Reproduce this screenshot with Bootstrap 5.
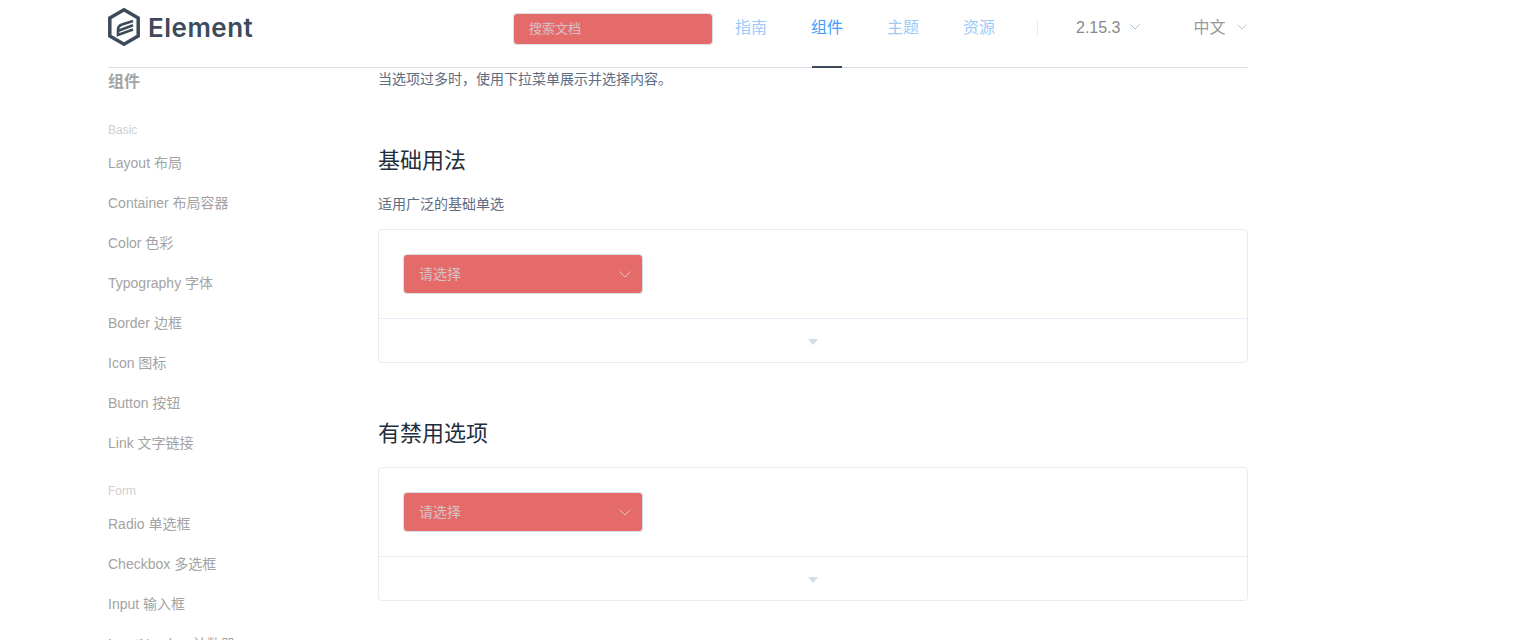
<!DOCTYPE html>
<html lang="zh">
<head>
<meta charset="utf-8">
<title>Element</title>
<link href="https://cdn.jsdelivr.net/npm/bootstrap@5.3.0/dist/css/bootstrap.min.css" rel="stylesheet">
<style>
html,body{height:640px;overflow:hidden;background:#fff}
body{font-family:"Liberation Sans","Noto Sans CJK SC",sans-serif;font-size:14px;color:#5e6d82}
.shell{width:1140px;margin-left:108px}
.topbar{height:68px;border-bottom:1px solid #dcdfe6;position:relative}
.brand{gap:8px;padding-top:8px;height:67px;width:405px;flex:none;align-items:flex-start}
.brand-text{font-family:"Inter","Liberation Sans",sans-serif;font-size:26px;line-height:40px;font-weight:600;color:#3d4a5a;letter-spacing:.5px}
.search-box{width:200px;height:32px;flex:none;margin-top:13px;background:#e56b6b;border:1px solid #dcdfe6;border-radius:4px;color:#d5c2c8;font-size:13px;line-height:30px;padding-left:15px}
.top-link{position:relative;flex:none;font-size:16px;line-height:24px;color:#9ccbf7;text-decoration:none;margin-top:16px;width:32px;white-space:nowrap}
.top-link.is-on{color:#409eff}
.top-link.is-on::after{content:"";position:absolute;left:1px;right:1px;top:50px;height:2px;background:#3d4a5a}
.sep{width:1px;height:16px;flex:none;background:#ebebeb;margin:20px 38px 0 0}
.ver{font-size:16px;line-height:24px;margin-top:16px;color:#888;white-space:nowrap}
.chev{display:block;flex:none;fill:none;stroke-width:1;margin-top:24px}
.side{width:270px;flex:none}
.side-title{font-size:16px;line-height:24px;font-weight:700;color:#a3a3a3;margin-top:2px}
.side-group{font-size:12px;line-height:18px;color:#cfcfcf;margin-top:27px}
.side-list{margin:0}
.side-list li{height:40px;line-height:40px;font-size:14px;color:#a3a3a3;white-space:nowrap}
.side-list+.side-group{margin-top:19px}
.side-group+.side-list{margin-top:4px}
.main-col{width:870px;flex:none}
.lead-text{line-height:20px;margin:1px 0 0}
.sec-title{font-size:22px;line-height:32px;font-weight:400;color:#1f2f3d;margin:56px 0 0}
.sec-desc{line-height:20px;margin:17px 0 15px}
.demo-box{border:1px solid #ebebeb;border-radius:4px;height:134px}
.demo-body{height:89px;padding:24px;border-bottom:1px solid #eaeefb}
.fake-select{width:240px;height:40px;background:#e56b6b;border:1px solid #dcdfe6;border-radius:4px;color:#d5c2c8;line-height:38px;padding:0 11px 0 15px}
.demo-foot{height:43px;padding-top:2px}
.tri{width:0;height:0;border-left:5px solid transparent;border-right:5px solid transparent;border-top:6px solid #d3dce6}
.sec-gap{margin-top:55px}
.sec-gap+.demo-box{margin-top:17px}
</style>
</head>
<body>
<header class="shell topbar d-flex">
  <div class="brand d-flex">
    <svg width="32" height="38" viewBox="0 0 32 38" fill="none" stroke="#3d4a5a">
      <path d="M16 1.800 30.200 10v18L16 36.200 1.800 28V10Z" stroke-width="3.500" stroke-linejoin="miter"/>
      <path d="M25 13 14 16.500Q10 18 10 21.500V27L25 21.500M11 22.500 25 17.200" stroke-width="2.600"/>
    </svg>
    <span class="brand-text">Element</span>
  </div>
  <div class="search-box">搜索文档</div>
  <a class="top-link" style="margin-left:22px" href="#">指南</a>
  <a class="top-link is-on" style="margin-left:44px" href="#">组件</a>
  <a class="top-link" style="margin-left:44px" href="#">主题</a>
  <a class="top-link" style="margin-left:44px;margin-right:42px" href="#">资源</a>
  <div class="sep"></div>
  <span class="ver">2.15.3</span>
  <svg class="chev" style="margin-left:10px" width="10" height="6" viewBox="0 0 10 6" stroke="#9cc0e0"><path d="M.5.5 5 5 9.500.5"/></svg>
  <span class="ver" style="margin-left:53px;color:#999">中文</span>
  <svg class="chev" style="margin-left:11px" width="10" height="6" viewBox="0 0 10 6" stroke="#c8c8c8"><path d="M.5.5 5 5 9.500.5"/></svg>
</header>
<div class="shell d-flex">
  <aside class="side">
    <div class="side-title">组件</div>
    <div class="side-group">Basic</div>
    <ul class="side-list list-unstyled">
      <li>Layout 布局</li><li>Container 布局容器</li><li>Color 色彩</li><li>Typography 字体</li><li>Border 边框</li><li>Icon 图标</li><li>Button 按钮</li><li>Link 文字链接</li>
    </ul>
    <div class="side-group">Form</div>
    <ul class="side-list list-unstyled">
      <li>Radio 单选框</li><li>Checkbox 多选框</li><li>Input 输入框</li><li>InputNumber 计数器</li>
    </ul>
  </aside>
  <main class="main-col">
    <p class="lead-text">当选项过多时，使用下拉菜单展示并选择内容。</p>
    <h3 class="sec-title">基础用法</h3>
    <p class="sec-desc">适用广泛的基础单选</p>
    <div class="demo-box">
      <div class="demo-body">
        <div class="fake-select d-flex justify-content-between align-items-center"><span>请选择</span><svg width="12" height="7" viewBox="0 0 12 7" fill="none" stroke="#dcc4c8"><path d="M.5.5 6 6 11.500.5"/></svg></div>
      </div>
      <div class="demo-foot d-flex justify-content-center align-items-center"><span class="tri"></span></div>
    </div>
    <h3 class="sec-title sec-gap">有禁用选项</h3>
    <div class="demo-box">
      <div class="demo-body">
        <div class="fake-select d-flex justify-content-between align-items-center"><span>请选择</span><svg width="12" height="7" viewBox="0 0 12 7" fill="none" stroke="#dcc4c8"><path d="M.5.5 6 6 11.500.5"/></svg></div>
      </div>
      <div class="demo-foot d-flex justify-content-center align-items-center"><span class="tri"></span></div>
    </div>
  </main>
</div>
<script src="https://cdn.jsdelivr.net/npm/bootstrap@5.3.0/dist/js/bootstrap.bundle.min.js"></script>
</body>
</html>
